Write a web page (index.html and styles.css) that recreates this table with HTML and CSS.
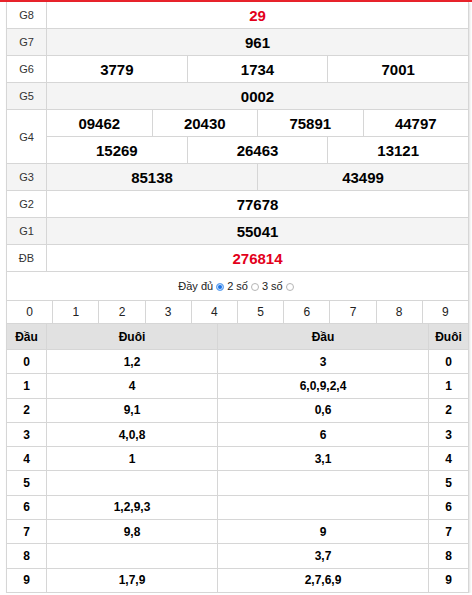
FILE: index.html
```html
<!DOCTYPE html>
<html lang="vi">
<head>
<meta charset="utf-8">
<title>Kết quả xổ số</title>
<link rel="stylesheet" href="styles.css">
</head>
<body>
<div class="topbar"></div>
<div class="box">
  <div class="prizes">
    <div class="lbl">G8</div><div class="num red s12">29</div>
    <div class="lbl alt">G7</div><div class="num alt s12">961</div>
    <div class="lbl">G6</div><div class="num s4">3779</div><div class="num s4">1734</div><div class="num s4">7001</div>
    <div class="lbl alt">G5</div><div class="num alt s12">0002</div>
    <div class="lbl g4">G4</div><div class="num s3">09462</div><div class="num s3">20430</div><div class="num s3">75891</div><div class="num s3">44797</div>
    <div class="num s4">15269</div><div class="num s4">26463</div><div class="num s4">13121</div>
    <div class="lbl alt">G3</div><div class="num alt s6">85138</div><div class="num alt s6">43499</div>
    <div class="lbl">G2</div><div class="num s12">77678</div>
    <div class="lbl alt">G1</div><div class="num alt s12">55041</div>
    <div class="lbl">ĐB</div><div class="num red s12">276814</div>
  </div>
  <div class="opts">
    <span>Đầy đủ</span><span class="radio on"></span>
    <span>2 số</span><span class="radio"></span>
    <span>3 số</span><span class="radio"></span>
  </div>
  <div class="digits">
    <div>0</div><div>1</div><div>2</div><div>3</div><div>4</div><div>5</div><div>6</div><div>7</div><div>8</div><div>9</div>
  </div>
  <div class="lt">
    <div class="th">Đầu</div><div class="th">Đuôi</div><div class="th">Đầu</div><div class="th">Đuôi</div>
    <div>0</div><div>1,2</div><div>3</div><div>0</div>
    <div>1</div><div>4</div><div>6,0,9,2,4</div><div>1</div>
    <div>2</div><div>9,1</div><div>0,6</div><div>2</div>
    <div>3</div><div>4,0,8</div><div>6</div><div>3</div>
    <div>4</div><div>1</div><div>3,1</div><div>4</div>
    <div>5</div><div></div><div></div><div>5</div>
    <div>6</div><div>1,2,9,3</div><div></div><div>6</div>
    <div>7</div><div>9,8</div><div>9</div><div>7</div>
    <div>8</div><div></div><div>3,7</div><div>8</div>
    <div>9</div><div>1,7,9</div><div>2,7,6,9</div><div>9</div>
  </div>
</div>
</body>
</html>
```
FILE: styles.css
```css
* { box-sizing: border-box; }
body {
  margin: 0;
  font-family: "Liberation Sans", Arial, sans-serif;
  background: #fff;
  color: #000;
}
.topbar {
  height: 2px;
  background: #e8232b;
}
.box {
  margin-left: 6px;
  width: 463px;
  border-left: 1px solid #d6d6d6;
  border-right: 1px solid #d6d6d6;
  border-bottom: 1px solid #d6d6d6;
  box-shadow: 1px 1px 2px rgba(0,0,0,0.12);
}
.prizes {
  display: grid;
  grid-template-columns: 39px repeat(12, 1fr);
  grid-auto-rows: 26px;
  gap: 1px;
  background: #d6d6d6;
}
.prizes > div {
  background: #fff;
  display: flex;
  align-items: center;
  justify-content: center;
}
.prizes > .alt { background: #f4f4f4; }
.lbl {
  font-size: 11px;
  color: #333;
}
.g4 { grid-row: span 2; }
.num {
  font-size: 15px;
  font-weight: bold;
}
.red { color: #e3001b; }
.s12 { grid-column: span 12; }
.s6 { grid-column: span 6; }
.s4 { grid-column: span 4; }
.s3 { grid-column: span 3; }
.opts {
  height: 30px;
  border-top: 1px solid #d6d6d6;
  border-bottom: 1px solid #d6d6d6;
  display: flex;
  align-items: center;
  justify-content: center;
  font-size: 11px;
  color: #222;
}
.radio {
  width: 8px;
  height: 8px;
  border-radius: 50%;
  border: 1px solid #b5b5b5;
  background: #fff;
  margin: 1px 3px 0 3px;
}
.radio.on {
  border: 1px solid #6aa8f0;
  background: #1a73e8;
  box-shadow: inset 0 0 0 1px #cfe2fb;
}
.digits {
  display: grid;
  grid-template-columns: repeat(10, 1fr);
  gap: 1px;
  background: #d6d6d6;
  border-bottom: 1px solid #d6d6d6;
}
.digits > div {
  background: #fff;
  height: 22px;
  display: flex;
  align-items: center;
  justify-content: center;
  font-size: 12px;
  color: #222;
}
.lt {
  display: grid;
  grid-template-columns: 39px 170px 1fr 39px;
  grid-template-rows: 25px;
  grid-auto-rows: 23.3px;
  gap: 1px;
  background: #d6d6d6;
}
.lt > div {
  background: #fff;
  display: flex;
  align-items: center;
  justify-content: center;
  font-size: 12px;
  font-weight: bold;
}
.lt > .th {
  background: #e1e1e1;
}
```
